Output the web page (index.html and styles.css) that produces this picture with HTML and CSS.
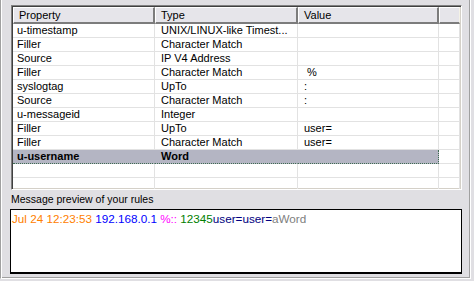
FILE: index.html
```html
<!DOCTYPE html>
<html lang="en">
    <head>
        <meta charset="UTF-8" />
        <title>Parser rules</title>
        <link rel="stylesheet" href="styles.css">
    </head>
    <body>
        <div class="panel">
            <div class="list">
                <div class="row head">
                    <div>Property</div><div>Type</div><div>Value</div><div></div>
                </div>
                <div class="row"><div>u-timestamp</div><div>UNIX/LINUX-like Timest...</div><div></div><div></div></div>
                <div class="row"><div>Filler</div><div>Character Match</div><div></div><div></div></div>
                <div class="row"><div>Source</div><div>IP V4 Address</div><div></div><div></div></div>
                <div class="row"><div>Filler</div><div>Character Match</div><div>&nbsp;%</div><div></div></div>
                <div class="row"><div>syslogtag</div><div>UpTo</div><div>:</div><div></div></div>
                <div class="row"><div>Source</div><div>Character Match</div><div>:</div><div></div></div>
                <div class="row"><div>u-messageid</div><div>Integer</div><div></div><div></div></div>
                <div class="row"><div>Filler</div><div>UpTo</div><div>user=</div><div></div></div>
                <div class="row"><div>Filler</div><div>Character Match</div><div>user=</div><div></div></div>
                <div class="row selected"><div>u-username</div><div>Word</div><div></div><div></div></div>
                <div class="row"><div></div><div></div><div></div><div></div></div>
                <div class="row"><div></div><div></div><div></div><div></div></div>
                <div class="row"><div></div><div></div><div></div><div></div></div>
            </div>
            <div class="caption">Message preview of your rules</div>
            <div class="preview"><span class="c-date">Jul 24 12:23:53</span> <span class="c-ip">192.168.0.1</span> <span class="c-tag">%::</span> <span class="c-id">12345</span><span class="c-user">user=user=</span><span class="c-word">aWord</span></div>
        </div>
    </body>
</html>
```

FILE: styles.css
```css
* {
    margin: 0;
    padding: 0;
    box-sizing: border-box;
}
html,
body {
    width: 474px;
    height: 281px;
    overflow: hidden;
    background-color: #e0dfe3;
}
body {
    font-family: "Liberation Sans", Arial, sans-serif;
    font-size: 10.5px;
    color: black;
}
.panel {
    width: 471px;
    height: 279px;
    padding: 5px 0 0 10px;
    border-left: 1px solid #a0a0a0;
    border-right: 1px solid #fff;
    border-bottom: 1px solid #fff;
    box-shadow: inset 1px 0 #fff, inset -1px -1px #a0a0a0;
}
.list {
    width: 451px;
    height: 185px;
    padding: 1px;
    overflow: hidden;
    font-size: 11px;
    background-color: #fff;
    border: 1px solid;
    border-color: #808080 #fff #fff #808080;
    box-shadow: inset 1px 1px #404040, inset -1px -1px #d4d0c8;
}
.row {
    display: grid;
    grid-template-columns: 142px 143px 141px 21px;
    height: 14px;
    line-height: 13px;
    & > div {
        padding-left: 6px;
        white-space: nowrap;
        overflow: hidden;
        border-right: 1px solid #e2e2e2;
        border-bottom: 1px solid #e2e2e2;
    }
    & > div:first-child {
        padding-left: 4px;
    }
}
.head {
    height: 17px;
    line-height: 14px;
    & > div {
        padding-left: 5px;
        background-color: #e6e5ea;
        border-top: 1px solid #fff;
        border-left: 1px solid #fff;
        border-right: 2px solid #7c7c7c;
        border-bottom: 2px solid #7c7c7c;
    }
    & > div:first-child {
        padding-left: 5px;
    }
    & > div:last-child {
        border-right: 1px solid #f4f2e6;
    }
}
.selected {
    & > div {
        font-weight: bold;
        background-color: #b4b5c3;
        border-right-color: #b4b5c3;
        border-bottom: 1px dotted #3f6b52;
    }
    & > div:nth-child(3) {
        border-right: 1px dotted #3f6b52;
    }
    & > div:last-child {
        background-color: #fff;
        border-right-color: #e2e2e2;
        border-bottom: 1px solid #e2e2e2;
    }
}
.caption {
    height: 19px;
    line-height: 19px;
}
.preview {
    width: 452px;
    height: 65px;
    margin-left: -1px;
    padding: 2px 1px;
    font-size: 11.7px;
    line-height: 14px;
    white-space: nowrap;
    background-color: #fff;
    border: 1px solid #000;
    border-bottom-width: 2px;
}
.c-date {
    color: #ff8000;
}
.c-ip {
    color: #0000ff;
}
.c-tag {
    color: #ff00ff;
}
.c-id {
    color: #008000;
}
.c-user {
    color: #000080;
}
.c-word {
    color: #808080;
}
```
